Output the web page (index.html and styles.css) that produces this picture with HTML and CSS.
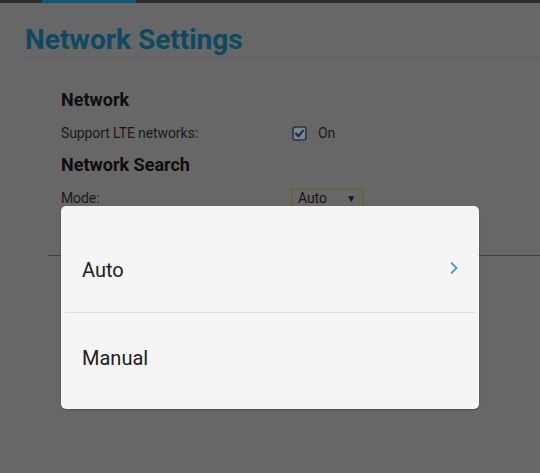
FILE: index.html
```html
<!DOCTYPE html>
<html>
<head>
<meta charset="utf-8">
<link rel="stylesheet" href="styles.css">
</head>
<body>
<div class="topbar"><div class="tab"></div></div>
<h1 class="title">Network Settings</h1>
<div class="rule"></div>
<div class="content">
  <h2 class="heading">Network</h2>
  <div class="row">
    <span class="label">Support LTE networks:</span>
    <span class="check">
      <svg width="15" height="15" viewBox="0 0 15 15"><rect x="1" y="1" width="13" height="13" rx="2.5" fill="#7b8590" stroke="#23354c" stroke-width="1.6"/><path d="M4 7.6 L6.4 10.2 L11 4.6" fill="none" stroke="#1c2e48" stroke-width="2.2" stroke-linecap="round" stroke-linejoin="round"/></svg>
    </span>
    <span class="value">On</span>
  </div>
  <h2 class="heading heading2">Network Search</h2>
  <div class="row row-mode">
    <span class="label">Mode:</span>
    <span class="select"><span>Auto</span><span class="arrow">▼</span></span>
  </div>
</div>
<div class="rule2"></div>

<div class="dialog">
  <div class="item item-first">
    <span>Auto</span>
    <svg class="chev" width="10" height="14" viewBox="0 0 10 14"><path d="M2 1.5 L7.5 7 L2 12.5" fill="none" stroke="#3ba4d6" stroke-width="1.8"/></svg>
  </div>
  <div class="divider"></div>
  <div class="item item-last"><span>Manual</span></div>
</div>
</body>
</html>
```

FILE: styles.css
```css
html, body {
  margin: 0;
  padding: 0;
}
body {
  width: 540px;
  height: 473px;
  overflow: hidden;
  background: #676767;
  font-family: Roboto, "Liberation Sans", sans-serif;
  position: relative;
}
.topbar {
  height: 3px;
  background: #2c2c2c;
  display: flex;
}
.tab {
  margin-left: 42px;
  width: 94px;
  background: #0e5877;
}
.title {
  margin: 0;
  padding: 20px 0 0 25px;
  font-size: 28px;
  font-weight: 700;
  line-height: 34px;
  color: #0b4a60;
}
.rule {
  margin: 0 0 0 25px;
  height: 1px;
  background: #5d5d5d;
}
.content {
  padding: 31px 0 0 61px;
}
.heading {
  margin: 0;
  font-size: 18px;
  font-weight: 700;
  line-height: 22px;
  color: #0e0e0e;
}
.heading2 {
  margin-top: 10px;
}
.row {
  display: flex;
  align-items: center;
  height: 22px;
  margin-top: 11px;
  font-size: 14px;
  letter-spacing: -0.1px;
  color: #1a1a1a;
}
.label {
  width: 230px;
}
.check {
  width: 15px;
  height: 15px;
  margin-left: 1px;
  display: flex;
}
.value {
  margin-left: 11px;
}
.row-mode {
  margin-top: 11px;
}
.select {
  box-sizing: border-box;
  width: 73px;
  height: 21px;
  border: 2px solid #6a603c;
  display: flex;
  align-items: center;
  justify-content: space-between;
  padding: 0 6px 0 5px;
  font-size: 14px;
  color: #161616;
}
.arrow {
  font-size: 10px;
}
.rule2 {
  margin: 46px 0 0 48px;
  height: 1px;
  background: #3f3f3f;
}
.dialog {
  position: absolute;
  left: 61px;
  top: 206px;
  width: 418px;
  height: 203px;
  box-sizing: border-box;
  background: #f5f5f5;
  border-radius: 5px;
  padding-top: 18px;
  box-shadow: 0 1px 2px rgba(0,0,0,0.25);
}
.item {
  box-sizing: border-box;
  display: flex;
  align-items: center;
  justify-content: space-between;
  padding: 0 20px 0 21px;
  font-size: 20px;
  color: #202020;
}
.item-first {
  height: 88px;
  padding-top: 3px;
}
.item-last {
  height: 90px;
}
.chev {
  display: block;
  margin-top: -3px;
}
.divider {
  margin: 0 3px 0 4px;
  height: 1px;
  background: #e0e0e0;
}
```
